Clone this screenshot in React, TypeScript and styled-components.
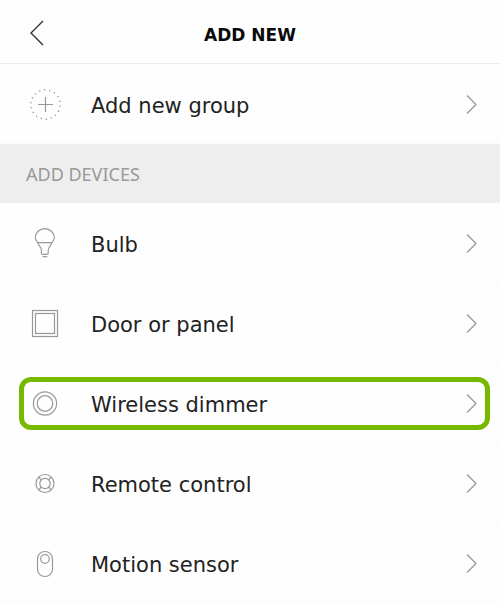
import React from "react";
import styled, { createGlobalStyle } from "styled-components";

const GlobalStyle = createGlobalStyle`
  *, *::before, *::after { box-sizing: border-box; }
  body {
    margin: 0;
    background: #fefefe;
    color: #222;
    font-family: "DejaVu Sans", Verdana, sans-serif;
  }
`;

const Header = styled.header`
  display: grid;
  grid-template-columns: 48px 1fr 48px;
  align-items: center;
  height: 64px;
  padding: 7px 13px 0;
  border-bottom: 1px solid #ebebeb;
`;

const BackButton = styled.button`
  display: flex;
  align-items: center;
  justify-content: center;
  height: 48px;
  padding: 0 0 4px;
  border: 0;
  background: none;
  color: #333;
  cursor: pointer;
`;

const Title = styled.h1`
  margin: 0;
  color: #0a0a0a;
  font-size: 17px;
  font-weight: 700;
  line-height: 24px;
  text-align: center;
`;

const List = styled.ul`
  margin: 0;
  padding: 0;
  list-style: none;
`;

const Item = styled.li`
  position: relative;
  border-bottom: 1px solid #fafafa;
`;

const RowButton = styled.button`
  display: flex;
  align-items: center;
  gap: 28px;
  width: 100%;
  height: 79px;
  padding: 1px 20px 0 27px;
  border: 0;
  background: none;
  color: inherit;
  font: inherit;
  text-align: left;
  cursor: pointer;
`;

const Label = styled.span`
  flex: 1;
  padding-top: 4px;
  font-size: 21px;
  line-height: 28px;
`;

const Highlight = styled.span`
  position: absolute;
  inset: 14px 10px 12px 19px;
  border: 5px solid #76b900;
  border-radius: 12px;
  pointer-events: none;
`;

const SectionTitle = styled.h2`
  display: flex;
  align-items: center;
  height: 59px;
  margin: 0;
  padding: 0 26px;
  background: #eee;
  color: #999;
  font-family: "Noto Sans", Verdana, sans-serif;
  font-size: 18px;
  font-weight: 400;
  line-height: 24px;
`;

const Glyph = styled.svg`
  flex: none;
  fill: none;
  stroke: #999;
  stroke-width: 1.2;
`;

const Chevron = styled.svg`
  flex: none;
  fill: none;
  stroke: #999;
  stroke-width: 1.3;
`;

const DOTS = Array.from({ length: 18 }, (_, i) => {
  const angle = ((i * 20 - 93) * Math.PI) / 180;
  return { x: 18.5 + 14.7 * Math.cos(angle), y: 18.5 + 14.7 * Math.sin(angle) };
});

const icons = {
  group: (
    <>
      {DOTS.map((dot, i) => (
        <circle key={i} cx={dot.x} cy={dot.y} r="0.8" fill="#999" stroke="none" />
      ))}
      <path d="M18.5 11v15M11 18.5h15" />
    </>
  ),
  bulb: (
    <>
      <path d="M10.6 17.6C9 16 8.3 14.5 8.3 12.8a9.5 9.2 0 0 1 19 0c0 1.7-.7 3.2-2.3 4.8z" />
      <path d="M11 17.6C11 21 14.4 21.5 14.4 25.5v2.7q0 1.2 1.2 1.2H20q1.200 0 1.200-1.200V25.500C21.200 21.500 24.600 21 24.600 17.600" />
      <path d="M15.500 31.700h4.800" />
    </>
  ),
  door: (
    <>
      <rect x="5.500" y="5.500" width="25" height="26" />
      <rect x="8.500" y="8.500" width="19" height="20" />
    </>
  ),
  dimmer: (
    <>
      <circle cx="18" cy="18.500" r="11.600" />
      <circle cx="18" cy="18.500" r="7.800" />
    </>
  ),
  remote: (
    <>
      <circle cx="18" cy="18.500" r="9" />
      <circle cx="18" cy="18.500" r="5.200" />
      <path d="M11.700 12.200l2.800 2.800M24.300 12.200l-2.800 2.800M11.700 24.800l2.800-2.800M24.300 24.800l-2.800-2.800" />
    </>
  ),
  motion: (
    <>
      <rect x="10.500" y="6.500" width="15" height="25" rx="7.500" />
      <circle cx="18" cy="14" r="4.300" />
    </>
  ),
};

type IconName = keyof typeof icons;

const devices: { icon: IconName; label: string; highlighted?: boolean }[] = [
  { icon: "bulb", label: "Bulb" },
  { icon: "door", label: "Door or panel" },
  { icon: "dimmer", label: "Wireless dimmer", highlighted: true },
  { icon: "remote", label: "Remote control" },
  { icon: "motion", label: "Motion sensor" },
];

function Row({ icon, label, highlighted }: { icon: IconName; label: string; highlighted?: boolean }) {
  return (
    <Item>
      <RowButton type="button">
        <Glyph width="36" height="36" viewBox="0 0 36 36" aria-hidden="true">
          {icons[icon]}
        </Glyph>
        <Label>{label}</Label>
        <Chevron width="16" height="20" viewBox="0 0 16 20" aria-hidden="true">
          <path d="M3 1.500l9 9-9 9" />
        </Chevron>
      </RowButton>
      {highlighted && <Highlight />}
    </Item>
  );
}

export default function App() {
  return (
    <>
      <GlobalStyle />
      <Header>
        <BackButton type="button" aria-label="Back">
          <svg width="14" height="26" viewBox="0 0 14 26" fill="none" stroke="currentColor" strokeWidth="1.4" aria-hidden="true">
            <path d="M13 1L1 13l12 12" />
          </svg>
        </BackButton>
        <Title>ADD NEW</Title>
      </Header>
      <main>
        <List>
          <Row icon="group" label="Add new group" />
        </List>
        <SectionTitle>ADD DEVICES</SectionTitle>
        <List>
          {devices.map((device) => (
            <Row key={device.label} {...device} />
          ))}
        </List>
      </main>
    </>
  );
}
